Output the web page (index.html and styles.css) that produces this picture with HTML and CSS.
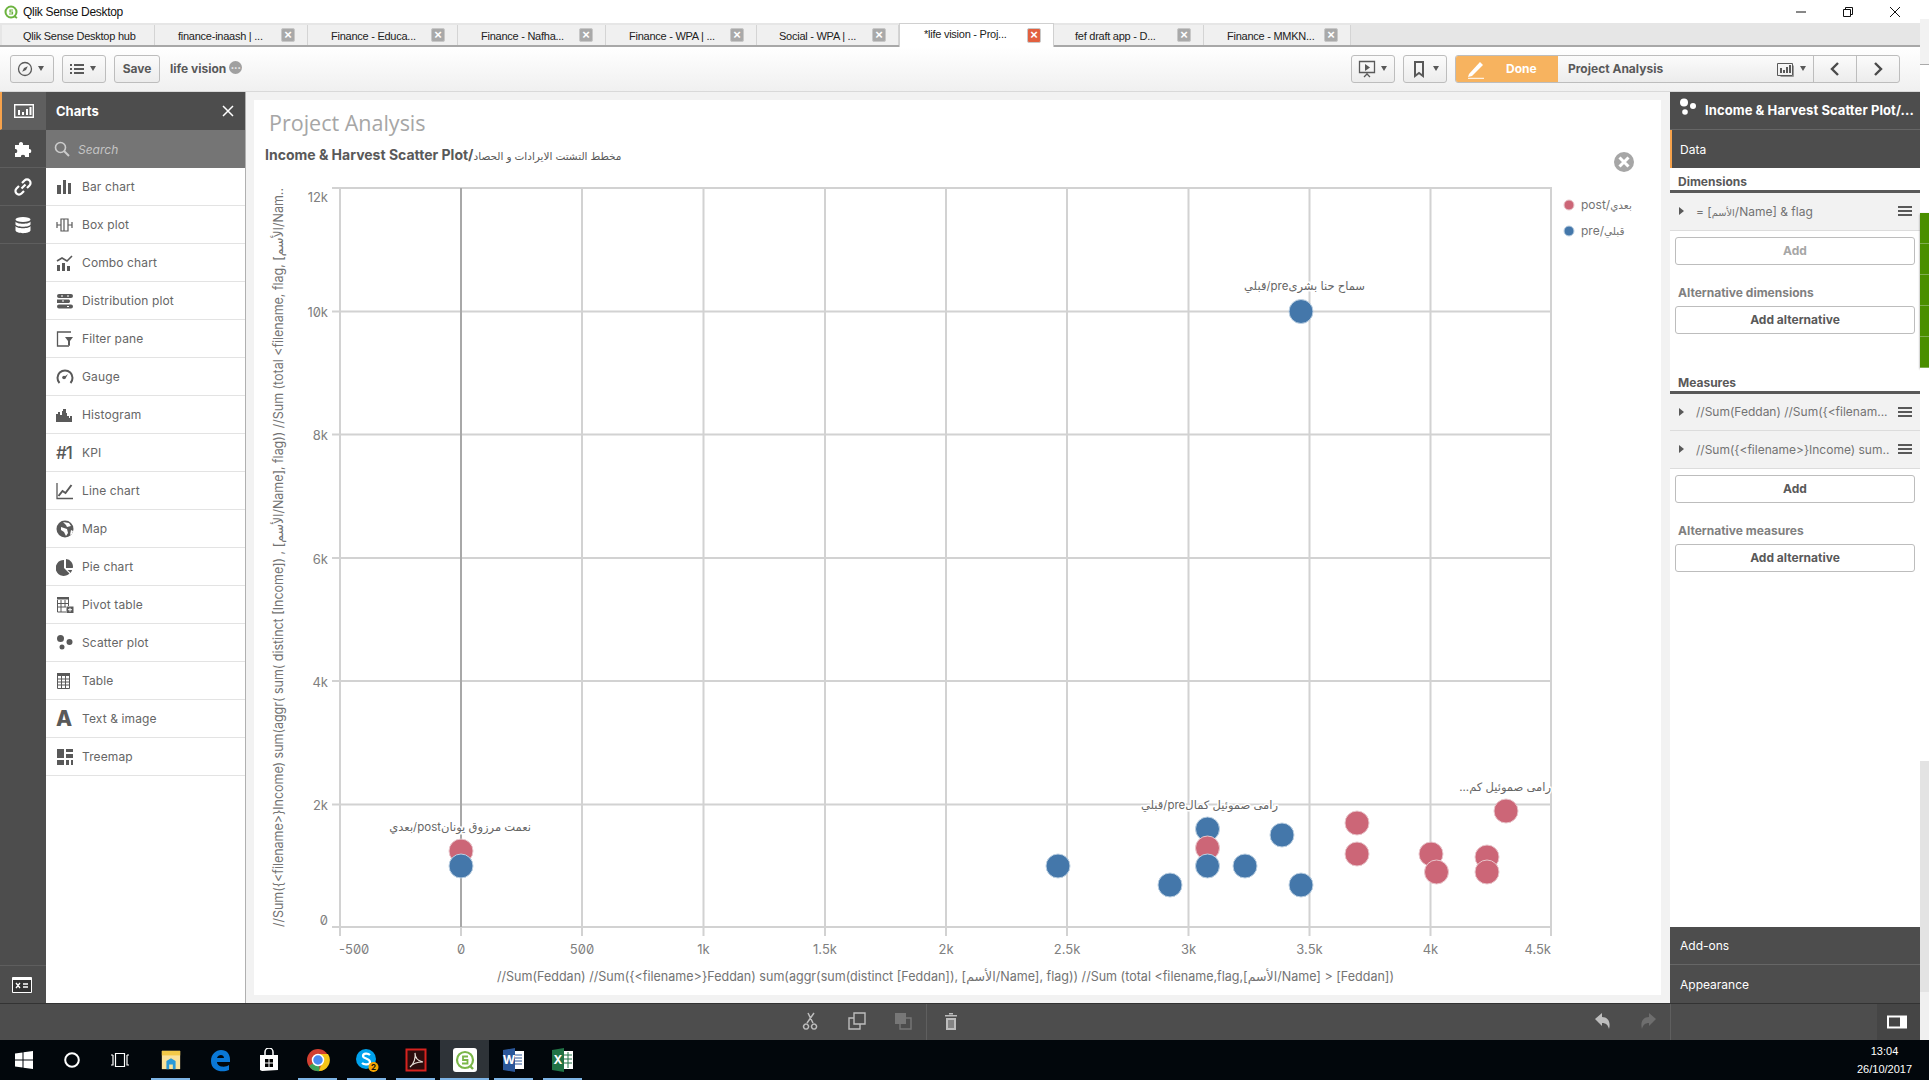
FILE: index.html
```html
<!DOCTYPE html>
<html lang="en">
<head>
<meta charset="utf-8">
<title>Qlik Sense Desktop</title>
<link rel="stylesheet" href="styles.css">
</head>
<body>
<div class="screen">
  <div class="upper">
    <div class="app">
      <header class="titlebar">
        <svg class="title-logo" viewBox="0 0 14 14"><circle cx="7" cy="7" r="5.5" fill="none" stroke="#6cb33f" stroke-width="2"/><path d="M9 5H6v2h2.500v2H5" fill="none" stroke="#6cb33f" stroke-width="1.200"/><path d="M10 11l3 2" stroke="#6cb33f" stroke-width="2"/></svg>
        <span class="title-text">Qlik Sense Desktop</span>
        <div class="win-controls">
          <svg class="win-btn" viewBox="0 0 12 12"><path d="M1 6h10" stroke="#111" fill="none"/></svg>
          <svg class="win-btn" viewBox="0 0 12 12"><path d="M1.500 3.500h7v7h-7zM3.500 3.500v-2h7v7h-2" stroke="#111" fill="none"/></svg>
          <svg class="win-btn" viewBox="0 0 12 12"><path d="M1 1l10 10M11 1L1 11" stroke="#111" fill="none"/></svg>
        </div>
      </header>

      <nav class="tabstrip">
        <div class="tab tab-hub"><span class="tab-label">Qlik Sense Desktop hub</span></div>
        <div class="tab"><span class="tab-label">finance-inaash | ...</span><span class="tab-close">×</span></div>
        <div class="tab"><span class="tab-label">Finance - Educa...</span><span class="tab-close">×</span></div>
        <div class="tab"><span class="tab-label">Finance - Nafha...</span><span class="tab-close">×</span></div>
        <div class="tab"><span class="tab-label">Finance - WPA | ...</span><span class="tab-close">×</span></div>
        <div class="tab"><span class="tab-label">Social - WPA | ...</span><span class="tab-close">×</span></div>
        <div class="tab tab-active"><span class="tab-label">*life vision - Proj...</span><span class="tab-close">×</span></div>
        <div class="tab"><span class="tab-label">fef draft app - D...</span><span class="tab-close">×</span></div>
        <div class="tab"><span class="tab-label">Finance - MMKN...</span><span class="tab-close">×</span></div>
      </nav>

      <div class="toolbar">
        <div class="tool-left">
          <button class="tbtn"><svg class="ico16" viewBox="0 0 16 16"><circle cx="8" cy="8" r="6.500" fill="none" stroke="#595959" stroke-width="1.300"/><path d="M10.800 5.200L9 9 5.200 10.800 7 7z" fill="#595959"/></svg><i class="caret"></i></button>
          <button class="tbtn"><svg class="ico16" viewBox="0 0 16 16"><path d="M1 3h2v2H1zM5 3h10v2H5zM1 7h2v2H1zM5 7h10v2H5zM1 11h2v2H1zM5 11h10v2H5z" fill="#595959"/></svg><i class="caret"></i></button>
          <button class="tbtn tbtn-save">Save</button>
          <span class="app-name">life vision</span>
          <span class="app-dots">•••</span>
        </div>
        <div class="tool-right">
          <button class="tbtn"><svg class="ico18" viewBox="0 0 18 18"><path d="M1.500 1.500h15v11h-15z" fill="none" stroke="#595959" stroke-width="1.300"/><path d="M7 4l5 3.500-5 3.500z" fill="#595959"/><path d="M9 13v2M6 17l3-3 3 3" stroke="#595959" fill="none" stroke-width="1.300"/></svg><i class="caret"></i></button>
          <button class="tbtn"><svg class="ico18" viewBox="0 0 18 18"><path d="M5 2h8v14l-4-3-4 3z" fill="none" stroke="#595959" stroke-width="2"/></svg><i class="caret"></i></button>
          <div class="sheet-group">
            <div class="done"><svg class="ico20" viewBox="0 0 20 20"><path d="M2 15L13 3l3 3L5 17l-4 1z" fill="#fff"/><path d="M1 19.300h16" stroke="#fff"/></svg><span>Done</span></div>
            <div class="sheet-name">
              <span>Project Analysis</span>
              <svg class="ico18 sheet-thumb" viewBox="0 0 18 18"><path d="M.5 3.500h15v12H.5z" fill="none" stroke="#595959"/><path d="M3 8h2v5H3zM6 10h2v3H6zM9 7h2v6H9zM12 5h2v8h-2z" fill="#595959"/><path d="M16.500 5.500v11h-13" fill="none" stroke="#999"/></svg>
              <i class="caret"></i>
            </div>
            <div class="sheet-nav"><svg class="ico14" viewBox="0 0 14 14"><path d="M10 1L4 7l6 6" fill="none" stroke="#4a4a4a" stroke-width="2.400"/></svg></div>
            <div class="sheet-nav"><svg class="ico14" viewBox="0 0 14 14"><path d="M4 1l6 6-6 6" fill="none" stroke="#4a4a4a" stroke-width="2.400"/></svg></div>
          </div>
        </div>
      </div>

      <div class="workspace">
        <aside class="rail">
          <div class="rail-item rail-active"><svg class="ico20" viewBox="0 0 20 20"><path d="M.7 3.700h18.600v12.600H.7z" fill="none" stroke="#fff" stroke-width="1.400"/><path d="M4 9h2v5H4zM8 11h2v3H8zM12 8h2v6h-2zM15.500 6h2v8h-2z" fill="#fff"/></svg></div>
          <div class="rail-item"><svg class="ico18" viewBox="0 0 18 18"><path d="M1 5h4c-1-4 5-4 4 0h6v4c3-1 3 5 0 4v4h-4c1-3-5-3-4 0H1v-4c3 1 3-5 0-4z" fill="#fff"/></svg></div>
          <div class="rail-item"><svg class="ico18" viewBox="0 0 18 18"><path d="M7.500 10.500l4-4M8 5l2.500-2.500a3 3 0 0 1 5 5L13 10M5 8l-2.500 2.500a3 3 0 0 0 5 5L10 13" fill="none" stroke="#fff" stroke-width="2.200"/></svg></div>
          <div class="rail-item"><svg class="ico18" viewBox="0 0 18 18"><ellipse cx="9" cy="3.500" rx="7.500" ry="2.500" fill="#fff"/><path d="M1.500 5.500c1 3 14 3 15 0v3c-1 3-14 3-15 0zM1.500 10c1 3 14 3 15 0v4.500c-1 3.500-14 3.500-15 0z" fill="#fff"/></svg></div>
          <div class="rail-item rail-bottom"><svg class="ico20" viewBox="0 0 20 16"><path d="M.5.500h19v15H.5z" fill="#333" stroke="#fff"/><path d="M.5.500h19v2.500H.5z" fill="#fff"/><path d="M4 6l4 5M8 6l-4 5M11 7h5M11 10h5" stroke="#fff" stroke-width="1.300"/></svg></div>
        </aside>

        <section class="assets">
          <div class="assets-head"><span>Charts</span><svg class="ico12" viewBox="0 0 12 12"><path d="M1 1l10 10M11 1L1 11" stroke="#fff" stroke-width="1.500"/></svg></div>
          <div class="assets-search"><svg class="ico16" viewBox="0 0 16 16"><circle cx="6.500" cy="6.500" r="5" fill="none" stroke="#ccc" stroke-width="1.600"/><path d="M10 10l5 5" stroke="#ccc" stroke-width="2"/></svg><span>Search</span></div>
          <ul class="asset-list">
            <li class="asset"><svg class="asset-ico" viewBox="0 0 18 18"><path d="M1 7h4v9H1zM7 2h3v14H7zM12 5h3v11h-3z"/></svg>Bar chart</li>
            <li class="asset"><svg class="asset-ico" viewBox="0 0 18 18"><path d="M5 3h7v12H5zM8 3v12M1 9h4M12 9h4M1 6v6M16 6v6" fill="none" stroke="#595959" stroke-width="1.200"/></svg>Box plot</li>
            <li class="asset"><svg class="asset-ico" viewBox="0 0 18 18"><path d="M1 11h3v6H1zM6 9h3v8H6zM11 12h3v5h-3z"/><path d="M1 7l5-3 5 3 5-5" fill="none" stroke="#595959" stroke-width="1.600"/></svg>Combo chart</li>
            <li class="asset"><svg class="asset-ico" viewBox="0 0 18 18"><path d="M3 2h12a2 2 0 0 1 0 4H3a2 2 0 0 1 0-4zM1 7.500h12a2 2 0 0 1 0 3.500H1zM3 12.500h12a2 2 0 0 1 0 4H3a2 2 0 0 1 0-4z"/><path d="M5 3.500h2v1H5zM11 3.500h2v1h-2zM6 8.500h2v1H6zM11 14h2v1h-2z" fill="#fff"/></svg>Distribution plot</li>
            <li class="asset"><svg class="asset-ico" viewBox="0 0 18 18"><path d="M15 2H1.500v14H13" fill="none" stroke="#595959" stroke-width="1.300"/><path d="M9 7h8l-3 4v5l-2-1v-4z"/></svg>Filter pane</li>
            <li class="asset"><svg class="asset-ico" viewBox="0 0 18 18"><path d="M3.500 15a7.500 7.500 0 1 1 11 0" fill="none" stroke="#595959" stroke-width="2"/><circle cx="8" cy="9.500" r="1.800"/><path d="M8 9l4-3-2.500 4.500z"/></svg>Gauge</li>
            <li class="asset"><svg class="asset-ico" viewBox="0 0 18 18"><path d="M0 16V8h2V6h2v3h2V5h1V3h3v4h1v3h2v2h1v-2h2v6z"/></svg>Histogram</li>
            <li class="asset"><span class="kpi-mark">#1</span>KPI</li>
            <li class="asset"><svg class="asset-ico" viewBox="0 0 18 18"><path d="M1 1v15.500h16" fill="none" stroke="#595959" stroke-width="1.300"/><path d="M2.500 14l4-5 3 2 6-8" fill="none" stroke="#595959" stroke-width="2"/></svg>Line chart</li>
            <li class="asset"><svg class="asset-ico asset-map" viewBox="0 0 18 18"><circle cx="9" cy="9" r="8.500"/><path d="M7 2l6 1 2 3-4 1-1-2zM5 7l6 2 1 4-2 3-2-4-3-2zM15 10l2 1-1 3-2 1z" fill="#fff"/></svg>Map</li>
            <li class="asset"><svg class="asset-ico" viewBox="0 0 18 18"><path d="M8 2v8l5.500 5.500A8 8 0 1 1 8 2z"/><path d="M10 1a7.500 7.500 0 0 1 6.800 9H10z"/><path d="M11.500 12l4.700.1-1.500 2.800z"/></svg>Pie chart</li>
            <li class="asset"><svg class="asset-ico" viewBox="0 0 18 18"><path d="M1 1h12v2.500H1z"/><path d="M1.500 4v12H10M12.500 3v7M5 4v12M9 4v7M1 7.500h12M1 11h9" fill="none" stroke="#595959"/><path d="M10.500 10.500h7v6.500h-7z" fill="#595959"/><path d="M12 13.700h4M14 11.800v3.900" stroke="#fff"/></svg>Pivot table</li>
            <li class="asset"><svg class="asset-ico" viewBox="0 0 18 18"><circle cx="4.500" cy="4.500" r="3.500"/><circle cx="13.500" cy="8" r="3"/><circle cx="6" cy="13" r="2.500"/></svg>Scatter plot</li>
            <li class="asset"><svg class="asset-ico" viewBox="0 0 18 18"><path d="M1 1h13v3H1z"/><path d="M1.500 4v12.500h12V4M1 7h13M1 10h13M1 13h13M5.500 4v12M9.500 4v12" fill="none" stroke="#595959"/></svg>Table</li>
            <li class="asset"><span class="text-mark">A</span>Text &amp; image</li>
            <li class="asset"><svg class="asset-ico" viewBox="0 0 18 18"><path d="M1 1h7v9H1zM10 1h7v3h-7zM10 6h7v4h-7zM1 12h7v5H1zM10 12h3v5h-3zM15 12h2v5h-2z"/></svg>Treemap</li>
          </ul>
        </section>

        <main class="stage">
          <div class="canvas">
            <h1 class="sheet-title">Project Analysis</h1>
            <h2 class="chart-title">Income &amp; Harvest Scatter Plot/<span class="ar">مخطط التشتت الايرادات و الحصاد</span></h2>
            <svg class="chart-close" viewBox="0 0 22 22"><circle class="close-disc" cx="11" cy="11" r="10"/><path class="close-x" d="M6.500 6.500l9 9M15.500 6.500l-9 9"/></svg>
            <svg class="chart" viewBox="254 170 1407 825">
              <g class="grid">
                <path d="M340 188H1551V927H340z"/>
                <path d="M582 188V936M703.500 188V936M825 188V936M946 188V936M1067 188V936M1188.500 188V936M1309.500 188V936M1430.500 188V936"/>
                <path d="M1551 927V936M340 927V936M461 927V936"/>
                <path d="M332 311.500H1551M332 434.500H1551M332 558H1551M332 681H1551M332 804.500H1551M332 188H340M332 927H340"/>
              </g>
              <path class="zero-line" d="M461 188V927"/>
              <g class="tick-y">
                <text x="328" y="202">12k</text>
                <text x="328" y="317">10k</text>
                <text x="328" y="440">8k</text>
                <text x="328" y="564">6k</text>
                <text x="328" y="687">4k</text>
                <text x="328" y="810">2k</text>
                <text x="328" y="925">0</text>
              </g>
              <g class="tick-x">
                <text class="tick-start" x="339" y="954">-500</text>
                <text x="461" y="954">0</text>
                <text x="582" y="954">500</text>
                <text x="703.500" y="954">1k</text>
                <text x="825" y="954">1.5k</text>
                <text x="946" y="954">2k</text>
                <text x="1067" y="954">2.5k</text>
                <text x="1188.500" y="954">3k</text>
                <text x="1309.500" y="954">3.5k</text>
                <text x="1430.500" y="954">4k</text>
                <text class="tick-end" x="1551" y="954">4.5k</text>
              </g>
              <text class="axis-title" x="497" y="981" textLength="897" lengthAdjust="spacingAndGlyphs">//Sum(Feddan) //Sum({&lt;filename&gt;}Feddan) sum(aggr(sum(distinct [Feddan]), [الأسم/Name], flag)) //Sum (total &lt;filename,flag,[الأسم/Name] &gt; [Feddan])</text>
              <text class="axis-title" transform="translate(283 927) rotate(-90)" textLength="739" lengthAdjust="spacingAndGlyphs">//Sum({&lt;filename&gt;}Income) sum(aggr( sum( distinct [Income]) , [الأسم/Name], flag)) //Sum (total &lt;filename, flag, [الأسم/Nam..</text>
              <g class="dots">
                <circle class="dot-blue" cx="1301" cy="311.500" r="12"/>
                <circle class="dot-red" cx="1506" cy="811" r="12"/>
                <circle class="dot-red" cx="1357" cy="823" r="12"/>
                <circle class="dot-blue" cx="1207.500" cy="829" r="12"/>
                <circle class="dot-blue" cx="1282" cy="835" r="12"/>
                <circle class="dot-red" cx="1207.500" cy="848" r="12"/>
                <circle class="dot-red" cx="461" cy="851" r="12"/>
                <circle class="dot-red" cx="1357" cy="854" r="12"/>
                <circle class="dot-red" cx="1431" cy="854" r="12"/>
                <circle class="dot-red" cx="1487" cy="857" r="12"/>
                <circle class="dot-blue" cx="461" cy="866" r="12"/>
                <circle class="dot-blue" cx="1058" cy="866" r="12"/>
                <circle class="dot-blue" cx="1207.500" cy="866" r="12"/>
                <circle class="dot-blue" cx="1245" cy="866" r="12"/>
                <circle class="dot-red" cx="1436.500" cy="872" r="12"/>
                <circle class="dot-red" cx="1487" cy="872" r="12"/>
                <circle class="dot-blue" cx="1170" cy="885" r="12"/>
                <circle class="dot-blue" cx="1301" cy="885" r="12"/>
              </g>
              <g class="dot-labels">
                <text x="1365" y="290">سماح حنا بشرى‏pre/قبلي</text>
                <text x="531" y="831">نعمت مرزوق يونان‏post/بعدي</text>
                <text x="1278" y="809">رامى صموئيل كمال‏pre/قبلي</text>
                <text x="1551" y="791">رامى صموئيل كم...</text>
              </g>
              <g class="legend">
                <circle class="dot-red" cx="1569" cy="205" r="5"/>
                <text x="1581" y="209">post/<tspan class="ar-s">بعدي</tspan></text>
                <circle class="dot-blue" cx="1569" cy="231" r="5"/>
                <text x="1581" y="235">pre/<tspan class="ar-s">قبلي</tspan></text>
              </g>
            </svg>
          </div>
        </main>

        <aside class="props">
          <div class="props-head"><svg class="ico18 props-ico" viewBox="0 0 18 18"><circle cx="5" cy="4.500" r="4"/><circle cx="14" cy="8" r="3"/><circle cx="6" cy="14" r="2.800"/></svg><span>Income &amp; Harvest Scatter Plot/...</span></div>
          <div class="props-tab">Data</div>
          <div class="props-body">
            <h3 class="sec-title">Dimensions</h3>
            <div class="field"><i class="tri"></i><span class="field-text">= [<span class="ar">الأسم</span>/Name] &amp; flag</span><i class="burger"></i></div>
            <button class="add add-off">Add</button>
            <h4 class="alt-title alt-dim">Alternative dimensions</h4>
            <button class="add">Add alternative</button>
            <h3 class="sec-title sec-measures">Measures</h3>
            <div class="field"><i class="tri"></i><span class="field-text">//Sum(Feddan) //Sum({&lt;filenam...</span><i class="burger"></i></div>
            <div class="field"><i class="tri"></i><span class="field-text">//Sum({&lt;filename&gt;}Income) sum..</span><i class="burger"></i></div>
            <button class="add">Add</button>
            <h4 class="alt-title alt-meas">Alternative measures</h4>
            <button class="add">Add alternative</button>
          </div>
          <div class="props-foot">Add-ons</div>
          <div class="props-foot">Appearance</div>
        </aside>
      </div>

      <footer class="editbar">
        <div class="edit-group">
          <span class="edit-slot"><svg class="ico18" viewBox="0 0 18 18"><path d="M13 1L6 11M7 1l5 10M5 12a2.500 2.500 0 1 0 .1 0zM13 12a2.500 2.500 0 1 0 .1 0z" fill="none" stroke="#bdbdbd" stroke-width="1.500"/></svg></span>
          <span class="edit-slot"><svg class="ico18" viewBox="0 0 18 18"><path d="M6 1h11v11H6zM12 12v5H1V6h5" fill="none" stroke="#bdbdbd" stroke-width="1.400"/></svg></span>
          <span class="edit-slot edit-div"><svg class="ico18" viewBox="0 0 18 18"><path d="M1 1h11v11H1z" fill="#777"/><path d="M12 6h5v11H6v-5" fill="none" stroke="#777" stroke-width="1.400"/></svg></span>
          <span class="edit-slot"><svg class="ico18" viewBox="0 0 18 18"><path d="M3 3h12v1.500H3zM7 1h4v1.500H7zM4 6h10v12H4z" fill="#bdbdbd"/><path d="M7 8v8M9 8v8M11 8v8" stroke="#4d4d4d"/></svg></span>
        </div>
        <div class="edit-right">
          <span class="hist-slot"><svg class="ico18" viewBox="0 0 18 18"><path d="M1 7l7-6v4c6 0 9 5 7 12-1-4-3-6-7-6v3z" fill="#bdbdbd"/></svg></span>
          <span class="hist-slot"><svg class="ico18" viewBox="0 0 18 18"><path d="M17 7l-7-6v4C4 5 1 10 3 17c1-4 3-6 7-6v3z" fill="#6e6e6e"/></svg></span>
          <span class="toggle-slot"><svg class="ico20" viewBox="0 0 20 16"><path d="M0 1.500h20v13H0z" fill="#fff"/><path d="M2 3.500h11v9H2z" fill="#454545"/></svg></span>
        </div>
      </footer>
    </div>
    <div class="desktop-edge">
      <div class="edge-white edge-w1"></div>
      <div class="edge-tabs"></div>
      <div class="edge-white edge-w2"></div>
      <div class="edge-green"></div>
      <div class="edge-white edge-w3"></div>
      <div class="edge-grey"></div>
      <div class="edge-light"></div>
    </div>
  </div>

  <div class="taskbar">
    <span class="sys-slot"><svg class="ico20" viewBox="0 0 20 20"><path d="M1 3.500l7.500-1V9.500H1zM9.500 2.300L19 1v8.500H9.500zM1 10.500h7.500v7L1 16.500zM9.500 10.500H19V19l-9.500-1.300z" fill="#fff"/></svg></span>
    <span class="sys-slot"><svg class="ico20" viewBox="0 0 20 20"><circle cx="10" cy="10" r="6.800" fill="none" stroke="#fff" stroke-width="2"/></svg></span>
    <span class="sys-slot"><svg class="ico20" viewBox="0 0 20 20"><path d="M5.500 3.500h9v13h-9zM3 5v10H1M17 5v10h2M1 5h2M17 5h2" fill="none" stroke="#fff" stroke-width="1.200"/></svg></span>
    <span class="app-slot app-run"><svg class="ico22" viewBox="0 0 24 24"><path d="M2 2h20v20H2z" fill="#fbe29a"/><path d="M2 2h20v5H2z" fill="#f3c948"/><path d="M7 22v-9l5-3 5 3v9h-3v-5h-4v5z" fill="#2b9ad8"/></svg></span>
    <span class="app-slot"><svg class="ico24" viewBox="0 0 24 24"><path d="M3 13C3 6 8 2 13 2c6 0 9 4 9 10v2H9c0 5 8 6 12 3v5c-7 3-18 1-18-9zm6-3h7c0-4-6-4-7 0z" fill="#0a78d7"/></svg></span>
    <span class="app-slot"><svg class="ico24" viewBox="0 0 24 24"><path d="M3 7h18v15l-16 1-2-1z" fill="#fff"/><path d="M8 7V4a4 4 0 0 1 8 0v3" fill="none" stroke="#fff" stroke-width="1.500"/><path d="M8 11h3.500v3.500H8zM12.500 11H16v3.500h-3.500zM8 15.500h3.500V19H8zM12.500 15.500H16V19h-3.500z" fill="#000"/></svg></span>
    <span class="app-slot app-run"><svg class="ico24" viewBox="0 0 24 24"><circle cx="12" cy="12" r="11" fill="#d23f31"/><path d="M12 12L3 18A11 11 0 0 0 14 23z" fill="#3da35a"/><path d="M12 6h10a11 11 0 0 1-9 17l4-11z" fill="#f5c518"/><circle cx="12" cy="12" r="5.500" fill="#4a8bf0" stroke="#fff" stroke-width="1.500"/></svg></span>
    <span class="app-slot app-run"><svg class="ico24" viewBox="0 0 24 24"><circle cx="11" cy="11" r="10" fill="#00a2ed"/><path d="M15 7c-2-2-7-2-7 1s7 2 7 6c0 3-6 3-8 1" fill="none" stroke="#fff" stroke-width="2.200"/><circle cx="18.500" cy="19" r="5" fill="#f7a600"/><text class="skype-badge" x="18.500" y="22">2</text></svg></span>
    <span class="app-slot app-run"><svg class="ico24" viewBox="0 0 24 24"><path d="M2.500 1.500h19v21h-19z" fill="#2b0c0c" stroke="#d6231f" stroke-width="2"/><path d="M6 19c4-3 6-10 5-14 0 5 3 8 8 9-5 0-10 1-13 5z" fill="none" stroke="#e8e0d8" stroke-width="1.200"/></svg></span>
    <span class="app-slot app-current"><svg class="ico24" viewBox="0 0 24 24"><rect width="24" height="24" rx="3" fill="#fff"/><circle cx="12" cy="12" r="8" fill="none" stroke="#7ab648" stroke-width="2.200"/><path d="M15 8.500H10v3.500h4.500v3.500H9" fill="none" stroke="#7ab648" stroke-width="1.800"/><path d="M17 18l3 3" stroke="#7ab648" stroke-width="2.400"/></svg></span>
    <span class="app-slot app-run"><svg class="ico24" viewBox="0 0 24 24"><path d="M9 3h13v18H9z" fill="#fff"/><path d="M12 7h8M12 10h8M12 13h8M12 16h8" stroke="#2b579a"/><path d="M1 2l12-2v24L1 22z" fill="#2b579a"/><text class="office-letter" x="7" y="16">W</text></svg></span>
    <span class="app-slot app-run"><svg class="ico24" viewBox="0 0 24 24"><path d="M9 3h13v18H9z" fill="#fff"/><path d="M13 7h8M13 11h8M13 15h8M17 4v16" stroke="#217346"/><path d="M1 2l12-2v24L1 22z" fill="#217346"/><text class="office-letter" x="7" y="16">X</text></svg></span>
    <div class="clock"><span>13:04</span><span>26/10/2017</span></div>
  </div>
</div>
</body>
</html>
```
FILE: styles.css
```css
* { box-sizing: border-box; }
html, body { margin: 0; padding: 0; }
body { width: 1929px; height: 1080px; overflow: hidden; background: #fff; font-family: Inter, "DejaVu Sans", sans-serif; font-size: 12px; color: #595959; }
h1, h2, h3, h4, ul { margin: 0; padding: 0; }
button { font-family: inherit; }
svg { display: block; flex: none; }
.ico12 { width: 12px; height: 12px; }
.ico14 { width: 14px; height: 14px; }
.ico16 { width: 16px; height: 16px; }
.ico18 { width: 18px; height: 18px; }
.ico20 { width: 20px; height: 20px; }
.ico22 { width: 22px; height: 22px; }
.ico24 { width: 24px; height: 24px; }
.ar { font-size: .82em; font-weight: 400; }
.ar-s { font-size: 10.500px; }

.screen { display: flex; flex-direction: column; height: 1080px; }
.upper { display: flex; height: 1040px; }
.app { width: 1920px; display: flex; flex-direction: column; }

/* title bar */
.titlebar { height: 23px; flex: none; display: flex; align-items: center; padding-left: 4px; background: #fff; }
.title-logo { width: 14px; height: 14px; }
.title-text { margin-left: 5px; font-family: "Liberation Sans", sans-serif; font-size: 12px; letter-spacing: -.3px; color: #111; }
.win-controls { margin-left: auto; display: flex; gap: 35px; padding-right: 19px; }
.win-btn { width: 12px; height: 12px; }

/* tabs */
.tabstrip { height: 24px; flex: none; display: flex; align-items: flex-end; padding-left: 2px; background: #e6e6e6; border-bottom: 2px solid #a8a8a8; }
.tab { height: 20px; width: 150px; display: flex; align-items: center; padding: 2px 0 0 23px; background: #f0f0f0; border-right: 1px solid #d4d4d4; font-family: "Liberation Sans", sans-serif; font-size: 11px; letter-spacing: -.25px; color: #222; position: relative; white-space: nowrap; }
.tab-hub { width: 153px; padding-left: 21px; }
.tab:nth-child(2) { width: 153px; }
.tab:nth-child(3) { width: 150px; }
.tab:nth-child(4) { width: 148px; }
.tab:nth-child(5) { width: 151px; }
.tab:nth-child(6) { width: 142px; padding-left: 22px; }
.tab-active { width: 155px !important; height: 24px; margin-bottom: -2px; background: #fff; border: 1px solid #d0d0d0; border-bottom: 0; padding: 0 0 3px 24px; }
.tab:nth-child(9) { width: 147px; }
.tab:nth-child(8) { width: 150px; padding-left: 21px; }
.tab-close { position: absolute; right: 12px; top: 3px; width: 14px; height: 14px; border-radius: 2px; background: #a9a9a9; border: 1px solid #c8c8c8; color: #fff; font-size: 13px; line-height: 11px; text-align: center; font-weight: 700; letter-spacing: 0; }
.tab-active .tab-close { background: #e2603f; top: 4px; height: 15px; }

/* toolbar */
.toolbar { height: 45px; flex: none; display: flex; align-items: center; justify-content: space-between; padding: 0 20px 1px 10px; background: linear-gradient(#fff, #f0f0f0); border-bottom: 1px solid #d9d9d9; }
.tool-left, .tool-right { display: flex; align-items: center; gap: 8px; }
.tbtn { width: 44px; height: 28px; padding: 0 0 0 6px; display: flex; align-items: center; gap: 5px; background: linear-gradient(#fbfbfb, #ececec); border: 1px solid #bdbdbd; border-radius: 3px; }
.tbtn-save { width: 46px; padding: 0; justify-content: center; font-size: 12px; font-weight: 700; color: #595959; }
.caret { width: 0; height: 0; border-left: 3.500px solid transparent; border-right: 3.500px solid transparent; border-top: 5px solid #595959; }
.app-name { margin-left: 2px; font-size: 12px; font-weight: 700; color: #595959; }
.app-dots { margin-left: -5px; width: 13px; height: 13px; border-radius: 50%; background: #a0a0a0; color: #eee; font-size: 6px; line-height: 13px; text-align: center; position: relative; top: -1px; overflow: hidden; }
.sheet-group { width: 445px; height: 28px; display: flex; border: 1px solid #bdbdbd; border-radius: 3px; background: linear-gradient(#fbfbfb, #ececec); }
.done { width: 102px; display: flex; align-items: center; gap: 19px; padding-left: 11px; background: #f7b35f; color: #fff; font-weight: 700; font-size: 12px; border-radius: 2px 0 0 2px; }
.sheet-name { flex: 1; display: flex; align-items: center; padding-left: 10px; font-weight: 700; color: #595959; gap: 2px; }
.sheet-name span { flex: 1; }
.sheet-thumb { margin-right: 3px; }
.sheet-name .caret { margin-right: 7px; }
.sheet-nav { width: 43px; display: flex; align-items: center; justify-content: center; border-left: 1px solid #bdbdbd; }

/* workspace */
.workspace { flex: 1; min-height: 0; display: flex; background: #f2f2f2; }
.rail { width: 46px; flex: none; display: flex; flex-direction: column; background: #4d4d4d; }
.rail-item { height: 38px; display: flex; align-items: center; justify-content: center; border-bottom: 1px solid #5e5e5e; padding-right: 1px; }
.rail-active { background: #5f5f5f; border-left: 2px solid #f7a24b; }
.rail-bottom { margin-top: auto; border-bottom: 0; border-top: 1px solid #5e5e5e; padding-right: 2px; }
.assets { width: 200px; flex: none; display: flex; flex-direction: column; background: #fff; border-right: 1px solid #b0b0b0; }
.assets-head { height: 38px; flex: none; display: flex; align-items: center; justify-content: space-between; padding: 0 11px 0 10px; background: #4d4d4d; color: #fff; font-size: 13px; font-weight: 700; }
.assets-search { height: 38px; flex: none; display: flex; align-items: center; gap: 8px; padding-left: 8px; background: #757575; color: #c4c4c4; font-style: italic; }
.asset-list { list-style: none; }
.asset { height: 38px; display: flex; align-items: center; gap: 8px; padding-left: 10px; border-bottom: 1px solid #e3e3e3; color: #666; font-size: 12px; letter-spacing: .12px; }
.asset-ico { width: 18px; height: 18px; fill: #595959; }
.kpi-mark { width: 18px; font-size: 17px; font-weight: 500; color: #595959; letter-spacing: -1px; }
.text-mark { width: 18px; font-size: 21px; font-weight: 800; color: #595959; }

.stage { flex: 1; min-width: 0; padding: 8px 9px 8px 8px; }
.canvas { height: 895px; display: flex; flex-direction: column; background: #fff; position: relative; }
.sheet-title { padding: 9px 0 0 15px; height: 40px; font-size: 21.500px; line-height: 27px; font-weight: 400; color: #a6a6a6; font-family: "Open Sans", sans-serif; }
.chart-title { height: 30px; padding: 7px 0 0 11px; font-size: 14px; line-height: 16px; font-weight: 700; color: #595959; }
.chart-title .ar { font-size: 10.500px; }
.chart-close { position: absolute; left: 1359px; top: 51px; width: 22px; height: 22px; }
.chart { width: 1407px; height: 825px; }
.grid path { fill: none; stroke: #d2d2d2; stroke-width: 2; }
.zero-line { fill: none; stroke: #a8a8a8; stroke-width: 2; }
.tick-y text, .tick-x text { font-size: 13px; fill: #808080; font-variant-numeric: slashed-zero; font-feature-settings: "zero"; }
.tick-y text { text-anchor: end; }
.tick-x text { text-anchor: middle; }
.tick-x .tick-start { text-anchor: start; }
.tick-x .tick-end { text-anchor: end; }
.axis-title { font-size: 13px; fill: #737373; }
.dot-red { fill: #cc6677; stroke: #e8c6cc; stroke-width: 1; }
.dot-blue { fill: #4477aa; stroke: #bcd0e2; stroke-width: 1; }
.dot-labels text { direction: rtl; font-size: 11.500px; fill: #666; paint-order: stroke; stroke: #fff; stroke-width: 3px; font-family: Inter, "DejaVu Sans", sans-serif; }
.legend text { font-size: 12px; fill: #737373; }
.close-disc { fill: #a6a6a6; }
.close-x { fill: none; stroke: #fff; stroke-width: 3; }

/* properties */
.props { width: 250px; flex: none; display: flex; flex-direction: column; background: #fff; }
.props-head { height: 38px; flex: none; display: flex; align-items: center; gap: 8px; padding: 0 0 2px 9px; background: #4d4d4d; color: #fff; font-size: 13px; font-weight: 700; letter-spacing: .08px; white-space: nowrap; overflow: hidden; fill: #fff; border-bottom: 1px solid #666; }
.props-ico { margin-top: -6px; }
.props-tab { height: 38px; flex: none; display: flex; align-items: center; padding-left: 8px; background: #4d4d4d; border-left: 2px solid #f7a24b; color: #fff; font-size: 12px; }
.props-body { flex: 1; min-height: 0; display: flex; flex-direction: column; }
.sec-title { height: 25px; padding: 6px 0 0 8px; font-size: 12px; line-height: 15px; font-weight: 700; color: #595959; border-bottom: 3px solid #595959; flex: none; }
.sec-measures { margin-top: 35px; }
.field { height: 37.500px; flex: none; display: flex; align-items: center; padding: 0 8px 0 9px; background: #f2f2f2; border-bottom: 1px solid #dcdcdc; }
.tri { width: 0; height: 0; border-top: 4px solid transparent; border-bottom: 4px solid transparent; border-left: 5px solid #595959; }
.field-text { flex: 1; margin-left: 12px; font-size: 12px; color: #737373; white-space: nowrap; overflow: hidden; }
.burger { width: 14px; height: 10px; border-top: 2px solid #595959; border-bottom: 2px solid #595959; position: relative; }
.burger::after { content: ""; position: absolute; left: 0; right: 0; top: 2px; height: 2px; background: #595959; }
.add { flex: none; width: 240px; height: 28px; margin: 6px 0 0 5px; padding: 0; background: #fff; border: 1px solid #bdbdbd; border-radius: 3px; font-size: 12px; font-weight: 700; color: #595959; }
.add-off { color: #a6a6a6; }
.alt-title { flex: none; height: 15px; padding-left: 8px; font-size: 12px; line-height: 15px; font-weight: 700; color: #808080; }
.alt-dim { margin-top: 20px; }
.alt-meas { margin-top: 20px; }
.alt-title + .add { margin-top: 6px; }
.props-foot { height: 38px; flex: none; display: flex; align-items: center; padding-left: 10px; background: #4d4d4d; color: #fff; font-size: 12px; border-bottom: 1px solid #666; }
.props-foot:last-child { border-bottom: 0; }

/* bottom edit bar */
.editbar { height: 37px; flex: none; display: flex; align-items: center; justify-content: space-between; padding-left: 786px; background: #4d4d4d; border-top: 1px solid #333; }
.edit-group, .edit-right { display: flex; align-items: center; height: 100%; }
.edit-slot { width: 47px; display: flex; justify-content: center; align-items: center; height: 100%; padding-bottom: 2px; }
.edit-div { border-right: 1px solid #5f5f5f; }
.hist-slot { width: 45px; display: flex; justify-content: center; padding-bottom: 2px; }
.toggle-slot { width: 250px; height: 100%; display: flex; align-items: center; justify-content: flex-end; padding-right: 13px; border-left: 1px solid #5f5f5f; background: linear-gradient(90deg, transparent 206px, #454545 206px); }

/* desktop peeking at right */
.desktop-edge { width: 9px; display: flex; flex-direction: column; }
.edge-white { background: #fff; flex: none; }
.edge-w1 { height: 19px; }
.edge-tabs { height: 46px; flex: none; background: #f2f2f2; border-bottom: 1px solid #aaa; }
.edge-w2 { height: 148px; }
.edge-green { height: 155px; flex: none; background: repeating-linear-gradient(#4a8f00 0, #4a8f00 30px, #7fae50 30px, #7fae50 31px); box-shadow: 0 1px 2px #888; }
.edge-w3 { height: 393px; }
.edge-grey { height: 231px; flex: none; background: #e3e3e3; }
.edge-light { flex: 1; background: #f0f0f0; }

/* taskbar */
.taskbar { height: 40px; flex: none; display: flex; align-items: stretch; background: #02070c; }
.sys-slot { width: 48px; display: flex; align-items: center; justify-content: center; }
.app-slot { width: 49px; display: flex; align-items: center; justify-content: center; position: relative; }
.app-run::after { content: ""; position: absolute; left: 5px; right: 5px; bottom: 0; height: 2px; background: #7db4e6; }
.app-current { background: #2e3338; }
.app-current::after { content: ""; position: absolute; left: 0; right: 0; bottom: 0; height: 2px; background: #7db4e6; }
.app-slot:nth-child(4) { margin-left: 2px; }
.skype-badge { font-size: 8px; font-weight: 700; fill: #111; text-anchor: middle; }
.office-letter { font-size: 12px; font-weight: 700; fill: #fff; text-anchor: middle; }
.clock { margin-left: auto; width: 89px; display: flex; flex-direction: column; align-items: center; justify-content: center; gap: 5px; color: #fff; font-family: "Liberation Sans", sans-serif; font-size: 11px; line-height: 13px; }
```
